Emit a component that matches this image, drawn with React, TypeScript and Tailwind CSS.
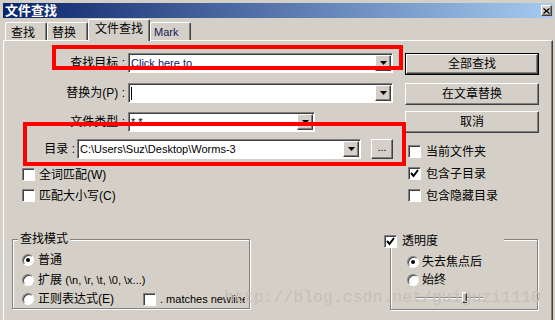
import React from "react";

const sunken =
  "border border-t-[#808080] border-l-[#808080] border-b-white border-r-white shadow-[inset_1px_1px_0_#404040]";
const raised =
  "border border-t-white border-l-white border-b-[#404040] border-r-[#404040] shadow-[inset_-1px_-1px_0_#808080]";

function DropArrow() {
  return (
    <div className={`${raised} w-[16px] h-[16px] shrink-0 bg-[#d4d0c8] flex items-center justify-center`}>
      <svg width="7" height="4" viewBox="0 0 7 4">
        <path d="M0 0h7L3.5 4z" fill="#000" />
      </svg>
    </div>
  );
}

function Combo({ className, children }: { className: string; children?: React.ReactNode }) {
  return (
    <div className={`${sunken} ${className} h-[20px] bg-white flex items-center pl-[2px] pr-px`}>
      <div className="flex-1 min-w-0 flex items-center text-[11px] whitespace-nowrap overflow-hidden">
        {children}
      </div>
      <DropArrow />
    </div>
  );
}

function Btn({ children, isDefault }: { children: React.ReactNode; isDefault?: boolean }) {
  const inner = (
    <div className={`${raised} h-full flex items-center justify-center`}>{children}</div>
  );
  return (
    <div className={isDefault ? "h-[22px] border border-black" : "h-[22px]"}>{inner}</div>
  );
}

function Check({ on }: { on?: boolean }) {
  return (
    <div className={`${sunken} w-[13px] h-[13px] shrink-0 bg-white flex items-center justify-center`}>
      {on && (
        <svg width="9" height="9" viewBox="0 0 9 9">
          <path d="M1 4l2.5 3L8 1" stroke="#000" strokeWidth="2" fill="none" />
        </svg>
      )}
    </div>
  );
}

function Radio({ on }: { on?: boolean }) {
  return (
    <div className={`${sunken} w-[12px] h-[12px] shrink-0 rounded-full bg-white flex items-center justify-center`}>
      {on && <div className="w-[4px] h-[4px] rounded-full bg-black" />}
    </div>
  );
}

export default function App() {
  return (
    <div className="relative w-[555px] h-[320px] overflow-hidden bg-[#d4d0c8] pl-[3px] pt-[3px] text-[12px] leading-none text-black font-['Liberation_Sans','Noto_Sans_CJK_SC',sans-serif]">
      {/* title bar */}
      <div className="w-[550px] h-[15px] bg-[linear-gradient(to_right,#0a246a,#a6caf0)] flex items-center justify-between pl-[2px] pr-px">
        <span className="text-white font-bold text-[13px]">文件查找</span>
        <div className={`${raised} w-[11px] h-[11px] bg-[#d4d0c8] flex items-center justify-center`}>
          <svg width="7" height="6" viewBox="0 0 7 6">
            <path d="M0.5 0.5l6 5M6.5 0.5l-6 5" stroke="#000" strokeWidth="1.3" />
          </svg>
        </div>
      </div>

      {/* tabs */}
      <div className="mt-px h-[21px] flex items-end pl-[2px]">
        <div className="w-[42px] h-[18px] border-t border-l border-white border-r border-r-[#404040] shadow-[inset_-1px_0_0_#808080] rounded-t-[2px] pl-[5px] pt-[4px]">
          查找
        </div>
        <div className="w-[41px] h-[18px] border-t border-l border-white border-r border-r-[#404040] shadow-[inset_-1px_0_0_#808080] rounded-t-[2px] pl-[4px] pt-[4px]">
          替换
        </div>
        <div className="relative z-10 -mb-px w-[62px] h-[22px] bg-[#d4d0c8] border-t border-l border-white border-r border-r-[#404040] shadow-[inset_-1px_0_0_#808080] rounded-t-[2px] pl-[6px] pt-[3px]">
          文件查找
        </div>
        <div className="w-[41px] h-[18px] border-t border-l border-white border-r border-r-[#404040] shadow-[inset_-1px_0_0_#808080] rounded-t-[2px] pl-[3px] pt-[4px] text-[11px] text-[#14145a]">
          Mark
        </div>
      </div>

      {/* panel */}
      <div className="w-[550px] h-[280px] border-t border-l border-white border-r border-r-[#404040] shadow-[inset_-1px_0_0_#808080] flex flex-col">
        <div className="flex">
          {/* left column */}
          <div className="w-[401px] pt-[12px]">
            <div className="flex items-center h-[20px]">
              <div className="w-[124px] text-right pr-[3px]">查找目标 :</div>
              <Combo className="w-[265px]">
                <span className="text-[#10106a]">Click here to</span>
              </Combo>
            </div>
            <div className="flex items-center h-[20px] mt-[10px]">
              <div className="w-[124px] text-right pr-[3px]">替换为(P) :</div>
              <Combo className="w-[265px]">
                <span className="w-px h-[13px] bg-black" />
              </Combo>
            </div>
            <div className="flex items-center h-[20px] mt-[9px]">
              <div className="w-[124px] text-right pr-[3px]">文件类型 :</div>
              <Combo className="w-[187px]">*.*</Combo>
            </div>
            <div className="flex items-center h-[20px] mt-[7px]">
              <div className="w-[73px] text-right pr-[2px]">目录 :</div>
              <Combo className="w-[284px]">{"C:\\Users\\Suz\\Desktop\\Worms-3"}</Combo>
              <div className={`${raised} ml-[10px] w-[22px] h-[20px] flex items-end justify-center pb-[5px] text-[11px]`}>
                ...
              </div>
            </div>
            <div className="flex items-center h-[13px] mt-[9px] ml-[18px]">
              <Check />
              <span className="ml-[4px]">全词匹配(W)</span>
            </div>
            <div className="flex items-center h-[13px] mt-[8px] ml-[18px]">
              <Check />
              <span className="ml-[4px]">匹配大小写(C)</span>
            </div>
          </div>

          {/* right column */}
          <div className="w-[134px] pt-[12px]">
            <Btn isDefault>全部查找</Btn>
            <div className="mt-[8px]">
              <Btn>在文章替换</Btn>
            </div>
            <div className="mt-[6px]">
              <Btn>取消</Btn>
            </div>
            <div className="flex items-center h-[13px] mt-[12px] ml-[3px]">
              <Check />
              <span className="ml-[5px]">当前文件夹</span>
            </div>
            <div className="flex items-center h-[13px] mt-[9px] ml-[3px]">
              <Check on />
              <span className="ml-[5px]">包含子目录</span>
            </div>
            <div className="flex items-center h-[13px] mt-[9px] ml-[3px]">
              <Check />
              <span className="ml-[5px]">包含隐藏目录</span>
            </div>
          </div>
        </div>

        {/* group boxes */}
        <div className="flex items-start mt-[37px]">
          <div className="relative ml-[8px] w-[238px] h-[70px] border border-[#808080] shadow-[inset_1px_1px_0_#fff,1px_1px_0_#fff]">
            <span className="absolute left-[5px] top-[-8px] px-[2px] bg-[#d4d0c8] leading-[14px]">查找模式</span>
            <div className="pl-[9px] pt-[14px]">
              <div className="flex items-center h-[12px]">
                <Radio on />
                <span className="ml-[4px]">普通</span>
              </div>
              <div className="flex items-center h-[12px] mt-[8px]">
                <Radio />
                <span className="ml-[4px]">
                  扩展 <span className="text-[11px]">{"(\\n, \\r, \\t, \\0, \\x...)"}</span>
                </span>
              </div>
              <div className="flex items-center h-[12px] mt-[7px]">
                <Radio />
                <span className="ml-[4px] w-[105px]">正则表达式(E)</span>
                <Check />
                <span className="ml-[4px] w-[85px] overflow-hidden whitespace-nowrap text-[11px]">. matches newline</span>
              </div>
            </div>
          </div>

          <div className="relative ml-[140px] w-[148px] h-[71px] border border-[#808080] shadow-[inset_1px_1px_0_#fff,1px_1px_0_#fff]">
            <div className="absolute left-[-7px] top-[-6px] w-[120px] h-[14px] bg-[#d4d0c8] flex items-center">
              <Check on />
              <span className="ml-[5px]">透明度</span>
            </div>
            <div className="pl-[16px] pt-[16px]">
              <div className="flex items-center h-[12px]">
                <Radio on />
                <span className="ml-[3px]">失去焦点后</span>
              </div>
              <div className="flex items-center h-[12px] mt-[6px]">
                <Radio />
                <span className="ml-[3px]">始终</span>
              </div>
              <div className="relative ml-[8px] mt-[6px] w-[68px] h-[11px] flex items-center">
                <div className="w-full h-[2px] border-t border-t-[#808080] border-b border-b-white" />
                <div className={`${raised} absolute left-[47px] top-0 w-[5px] h-[11px] bg-[#d4d0c8]`} />
              </div>
            </div>
          </div>
        </div>
      </div>

      {/* annotations */}
      <div className="absolute left-[52px] top-[45px] w-[351px] h-[25px] border-4 border-[#ff0000] pointer-events-none" />
      <div className="absolute left-[23px] top-[122px] w-[383px] h-[44px] border-4 border-[#ff0000] pointer-events-none" />
      <div className="absolute left-[224px] top-[290px] text-[16.5px] leading-[16px] text-[#c4c0b8] font-['Liberation_Mono',monospace] whitespace-nowrap pointer-events-none">
        http://blog.csdn.net/guiguzi1110
      </div>
    </div>
  );
}
